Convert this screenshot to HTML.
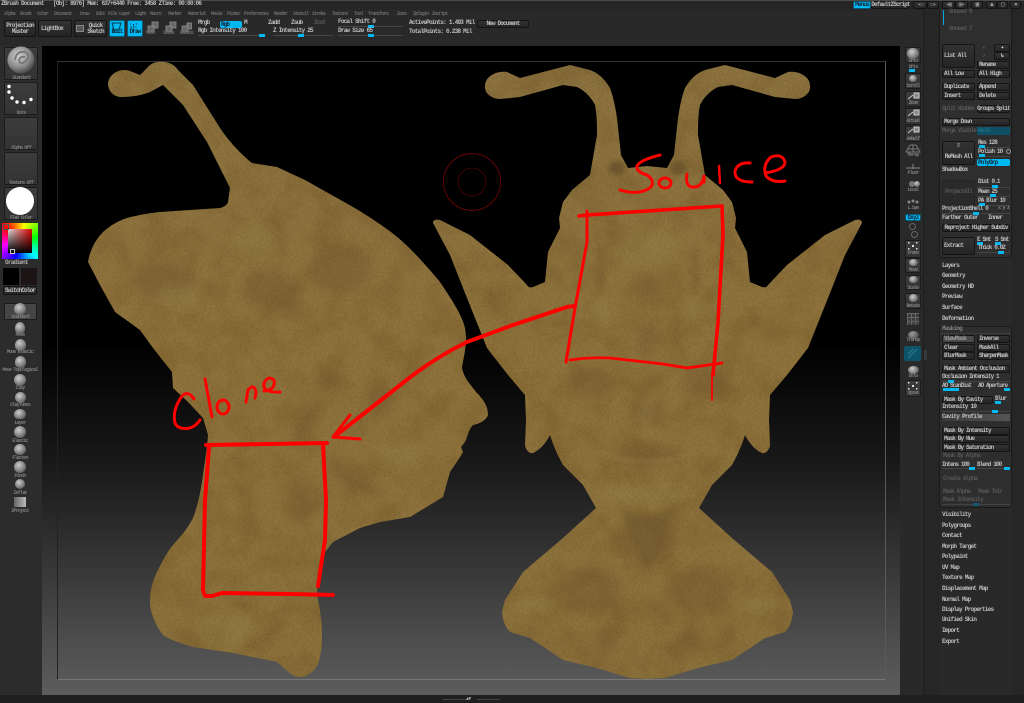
<!DOCTYPE html>
<html><head><meta charset="utf-8"><style>
html,body{margin:0;padding:0;background:#2a2a2a;width:1024px;height:703px;overflow:hidden}
#r{position:relative;width:1024px;height:703px;overflow:hidden;background:#292929;font:bold 6px/8px "Liberation Mono",monospace;letter-spacing:-.75px;color:#bdbdbd;filter:blur(.3px)}
#r div,#r i,#r b{position:absolute;display:block;font-style:normal;font-weight:bold;white-space:nowrap}
.b{display:flex!important;align-items:center;justify-content:center;background:linear-gradient(#323232,#252525);border:1px solid #141414;border-radius:2px;box-sizing:border-box;color:#bdbdbd;letter-spacing:-.85px}
.d{color:#565656}
.m{color:#6a6a6a;font-size:5px;letter-spacing:-.8px}
.s{height:1px;background:#444}
.h{width:6px;height:3px;background:#00b9f2}
.c{background:#00b9f2!important;color:#123!important;border-color:#0a5a75!important}
.u{background:linear-gradient(#3c3c3c,#333);border:1px solid #1c1c1c;box-sizing:border-box;border-radius:1px}
.l{text-align:center;color:#7c7c7c;font-size:5px;letter-spacing:-.8px}
.o{border-radius:50%;background:radial-gradient(circle at 40% 35%,#ccc,#777 60%,#333)}
</style></head><body><div id="r">

<!-- band backgrounds -->
<div style="left:0;top:0;width:1024px;height:1px;background:#4a4a4a"></div>
<div style="left:0;top:1px;width:1024px;height:9px;background:#262626"></div>
<div style="left:923px;top:10px;width:17px;height:693px;background:#262626"></div>
<div style="left:923px;top:10px;width:1px;height:693px;background:#1e1e1e"></div>
<div style="left:1012px;top:10px;width:12px;height:693px;background:#262626"></div>
<div style="left:0;top:695px;width:1024px;height:8px;background:#1f1f1f"></div>
<div style="left:0;top:46px;width:42px;height:649px;background:#2c2c2c"></div>

<!-- title -->
<b style="left:1px;top:0">ZBrush Document</b>
<b style="left:53px;top:0">[Obj: 8976] Mem: 637+6440 Free: 3458 ZTime: 00:00:06</b>
<b class="c b" style="left:853px;top:1px;width:18px;height:8px">Menus</b>
<b class="b" style="left:871px;top:1px;width:39px;height:8px">DefaultZScript</b>
<b class="b" style="left:913px;top:1px;width:14px;height:8px;color:#888">◂▭</b>
<b class="b" style="left:927px;top:1px;width:12px;height:8px;color:#888">▭▸</b>
<b class="b" style="left:942px;top:1px;width:13px;height:8px;color:#888">◂▣</b>
<b class="b" style="left:955px;top:1px;width:13px;height:8px;color:#888">▣▸</b>
<b class="b" style="left:971px;top:1px;width:12px;height:8px;color:#aaa">▣</b>
<b class="b" style="left:986px;top:1px;width:11px;height:8px;color:#aaa">▲</b>
<b class="b" style="left:997px;top:1px;width:11px;height:8px;color:#aaa">▢</b>
<b class="b" style="left:1010px;top:1px;width:11px;height:8px;color:#ddd">✕</b>

<!-- menus -->
<div class="m" style="left:0;top:10px;width:480px;height:8px">
<b style="left:4px">Alpha</b><b style="left:20px">Brush</b><b style="left:37px">Color</b><b style="left:54px">Document</b><b style="left:80px">Draw</b><b style="left:96px">Edit</b><b style="left:108px">File</b><b style="left:119px">Layer</b><b style="left:135px">Light</b><b style="left:150px">Macro</b><b style="left:168px">Marker</b><b style="left:188px">Material</b><b style="left:211px">Movie</b><b style="left:227px">Picker</b><b style="left:244px">Preferences</b><b style="left:274px">Render</b><b style="left:293px">Stencil</b><b style="left:312px">Stroke</b><b style="left:332px">Texture</b><b style="left:354px">Tool</b><b style="left:368px">Transform</b><b style="left:397px">Zoom</b><b style="left:413px">Zplugin</b><b style="left:432px">Zscript</b>
</div>

<!-- toolbar -->
<b class="b" style="left:4px;top:20px;width:32px;height:17px;white-space:normal;text-align:center;line-height:6px">Projection<br>Master</b>
<b class="b" style="left:38px;top:20px;width:34px;height:17px;justify-content:flex-start;padding-left:2px">LightBox</b>
<b class="b" style="left:74px;top:20px;width:33px;height:17px;text-align:center;line-height:6px;padding-left:10px">Quick<br>Sketch</b>
<i style="left:76px;top:25px;width:8px;height:7px;background:#555;border:1px solid #888;box-sizing:border-box"></i>
<b class="c b" style="left:109px;top:20px;width:16px;height:17px;align-items:flex-end">Edit</b>
<b class="c b" style="left:127px;top:20px;width:16px;height:17px;align-items:flex-end">Draw</b>
<svg style="position:absolute;left:110px;top:21px" width="32" height="11" fill="none" stroke="#06384a"><path d="M2 2h9l-2 7H4zM4 9v2M9 9v2"/><path d="M23.500 3v6M20.500 6h6M20 3h1M26 3h1M20 9h1M26 9h1" stroke-dasharray="1.500 1"/></svg>
<svg style="position:absolute;left:146px;top:21px" width="46" height="12" fill="#666" stroke="#999" stroke-width=".7"><rect x="6" y="1" width="6" height="6"/><rect x="2" y="5" width="6" height="6"/><rect x="24" y="1" width="6" height="6"/><rect x="20" y="5" width="6" height="6"/><rect x="41" y="2" width="5" height="6"/><rect x="36" y="5" width="6" height="6"/></svg>
<b class="m" style="left:146px;top:29px">Move</b><b class="m" style="left:163px;top:29px">Scale</b><b class="m" style="left:180px;top:29px">Rotate</b>
<b style="left:198px;top:19px">Mrgb</b><b class="c b" style="left:220px;top:21px;width:22px;height:7px;justify-content:flex-start;padding-left:1px;border:0">Rgb</b><b style="left:244px;top:19px">M</b>
<b style="left:268px;top:19px">Zadd</b><b style="left:291px;top:19px">Zsub</b><b class="d" style="left:314px;top:19px">Zcut</b>
<b style="left:198px;top:27px">Rgb Intensity 100</b><i class="s" style="left:198px;top:35px;width:68px"></i><i class="h" style="left:259px;top:34px"></i>
<b style="left:273px;top:27px">Z Intensity 25</b><i class="s" style="left:273px;top:35px;width:60px"></i><i class="h" style="left:298px;top:34px"></i>
<b style="left:338px;top:18px">Focal Shift 0</b><i class="s" style="left:338px;top:26px;width:65px"></i><i class="h" style="left:368px;top:25px"></i>
<b style="left:338px;top:27px">Draw Size 65</b><i class="s" style="left:338px;top:35px;width:65px"></i><i class="h" style="left:368px;top:34px"></i>
<b style="left:409px;top:19px">ActivePoints: 1.493 Mil</b>
<b style="left:409px;top:28px">TotalPoints: 6.238 Mil</b>
<b class="b" style="left:477px;top:20px;width:52px;height:8px">New Document</b>

<!-- canvas -->
<div style="left:42px;top:46px;width:858px;height:649px;background:linear-gradient(#000 0,#000 46%,#1a1a1a 65%,#3a3a3a 82%,#5d5d5d 100%)"></div>
<div style="left:57px;top:61px;width:829px;height:619px;box-sizing:border-box;border:1px solid;border-color:#333 #5a5a5a #777 #222"></div>

<svg style="position:absolute;left:0;top:0" width="1024" height="703" viewBox="0 0 1024 703">
<defs>
<filter id="t" x="0" y="0" width="100%" height="100%" color-interpolation-filters="sRGB"><feTurbulence type="fractalNoise" baseFrequency=".035" numOctaves="5" seed="7"/><feColorMatrix values="0 0 0 0 .36  0 0 0 0 .24  0 0 0 0 .08  1.800 0 0 0 -.72"/></filter>
<filter id="t2" x="0" y="0" width="100%" height="100%" color-interpolation-filters="sRGB"><feTurbulence type="fractalNoise" baseFrequency=".5" numOctaves="2" seed="3"/><feColorMatrix values="0 0 0 0 .3  0 0 0 0 .24  0 0 0 0 .1  1 0 0 0 -.42"/></filter>
<filter id="bl" x="-40%" y="-40%" width="180%" height="180%"><feGaussianBlur stdDeviation="5"/></filter>
<filter id="bs" x="-40%" y="-40%" width="180%" height="180%"><feGaussianBlur stdDeviation="2"/></filter>
<clipPath id="cl">
<path id="pr" d="M108 83C110 72 122 68 130 71L140 75C146 70 150 62 158 62C167 61 174 64 178 70L193 85L220 128C230 143 242 155 252 163L277 167L305 180L353 207C375 220 392 232 403 242C418 256 430 270 440 282C452 300 462 315 465 328C468 345 463 358 462 368C464 378 470 384 476 392C482 398 488 405 488 415C486 421 478 424 473 425C468 430 468 436 465 442L461 447L463 452L460 457L450 472L443 497L410 517L380 522L360 528L333 542L325 552L318 572L317 595C320 610 322 620 322 635C322 650 320 658 318 664C314 672 307 677 300 677C292 677 284 668 277 662L233 653L193 647C180 643 170 640 163 635C155 625 150 612 150 602C150 590 153 580 157 572C162 562 167 552 173 545C182 535 188 528 193 518C198 505 201 490 203 475C205 460 207 450 208 435L203 418L188 402L173 388L172 372L153 348L140 330L115 312L100 285L88 262C90 250 95 240 103 232C111 225 118 221 127 218C138 215 150 213 160 212L220 208C224 207 227 205 228 202L230 188L207 142L183 105L163 85L150 92C140 96 130 97 120 97C112 96 108 90 108 83Z"/>
<path id="fr" d="M647 166L628 168L621 155L617 118C615 105 613 96 610 88C604 78 598 73 590 70L570 65L520 78L507 72C500 71 493 73 488 78C484 83 484 89 487 93C490 97 495 99 500 99L520 97L563 85L577 87C585 91 591 97 595 105C597 115 597 125 597 135L590 175L572 190L563 202L559 218L560 228L548 252L545 282L533 287C530 288 528 287 527 285L508 265L470 235L440 220C436 219 433 220 433 223L450 255L463 288L487 348L508 375L525 395L526 420L525 445C526 451 530 454 533 453C540 450 546 443 550 435C553 445 558 456 563 465L583 485L596 508L563 538L523 572L505 600L502 612C503 622 506 628 510 632L530 638L563 660L597 668L630 678L647 679L665 678L698 668L732 660L765 638L785 632C789 628 792 622 793 612L790 600L772 572L732 538L699 508L712 485L732 465C737 456 742 445 745 435C749 443 755 450 762 453C765 454 769 451 770 445L769 420L770 395L787 375L808 348L832 288L845 255L862 223C862 220 859 219 855 220L825 235L787 265L768 285C767 287 765 288 762 287L750 282L747 252L735 228L736 218L732 202L723 190L705 175L698 135C698 125 698 115 700 105C704 97 710 91 718 87L732 85L775 97L795 99C800 99 805 97 808 93C811 89 811 83 807 78C802 73 795 71 788 72L775 78L725 65L705 70C697 73 691 78 685 88C682 96 680 105 678 118L674 155L667 168L647 166Z"/>
</clipPath>
<linearGradient id="g" x1="0" y1="0" x2="0" y2="1"><stop offset="0" stop-color="#8c7340"/><stop offset=".5" stop-color="#8f733c"/><stop offset="1" stop-color="#8b713b"/></linearGradient>
</defs>
<g clip-path="url(#cl)">
<rect x="80" y="55" width="800" height="630" fill="url(#g)"/>
<rect x="80" y="55" width="800" height="630" filter="url(#t)" opacity=".28"/>
<g filter="url(#bl)" fill="#6f5232" opacity=".38">
<ellipse cx="285" cy="295" rx="9" ry="30" transform="rotate(-25 285 295)"/>
<ellipse cx="340" cy="270" rx="30" ry="22"/>
<ellipse cx="270" cy="290" rx="28" ry="18"/>
<ellipse cx="165" cy="280" rx="30" ry="18"/>
<ellipse cx="300" cy="500" rx="12" ry="25" opacity=".7"/>
<ellipse cx="590" cy="382" rx="22" ry="16"/>
<ellipse cx="705" cy="382" rx="22" ry="16"/>
<ellipse cx="647" cy="285" rx="14" ry="9"/>
<ellipse cx="647" cy="340" rx="10" ry="18"/>
<ellipse cx="647" cy="412" rx="18" ry="12"/>
<ellipse cx="647" cy="455" rx="34" ry="10"/>
<ellipse cx="647" cy="540" rx="28" ry="26"/>
<ellipse cx="590" cy="590" rx="30" ry="22"/>
<ellipse cx="700" cy="590" rx="30" ry="22"/>
<ellipse cx="606" cy="642" rx="10" ry="10"/>
<ellipse cx="688" cy="642" rx="12" ry="12"/>
<ellipse cx="380" cy="400" rx="14" ry="14"/>
<ellipse cx="330" cy="380" rx="12" ry="9"/>
<ellipse cx="305" cy="425" rx="7" ry="26" transform="rotate(25 305 425)"/>
<ellipse cx="355" cy="480" rx="30" ry="8" transform="rotate(30 355 480)"/>
</g>
<g filter="url(#bl)" fill="#9a8850" opacity=".35">
<ellipse cx="647" cy="250" rx="32" ry="20"/>
<ellipse cx="600" cy="310" rx="12" ry="14"/>
<ellipse cx="695" cy="310" rx="12" ry="14"/>
<ellipse cx="647" cy="495" rx="50" ry="12"/>
<ellipse cx="535" cy="605" rx="22" ry="8"/>
<ellipse cx="760" cy="605" rx="22" ry="8"/>
<ellipse cx="647" cy="415" rx="8" ry="24"/>
<ellipse cx="255" cy="240" rx="22" ry="16"/>
<ellipse cx="180" cy="295" rx="22" ry="12"/>
<ellipse cx="400" cy="455" rx="24" ry="14"/>
<ellipse cx="225" cy="630" rx="30" ry="18"/>
</g>
<g filter="url(#bs)" fill="#5d4a28" opacity=".6">
<ellipse cx="617" cy="168" rx="8" ry="7"/><ellipse cx="678" cy="168" rx="8" ry="7"/>
<ellipse cx="600" cy="270" rx="5" ry="25" opacity=".3"/><ellipse cx="695" cy="270" rx="5" ry="25" opacity=".3"/>
<path d="M617 500Q647 530 677 500L660 545L647 570L634 545Z" opacity=".35"/>
</g>
<path d="M600 453Q647 470 694 453" stroke="#a18f55" stroke-width="3" fill="none" opacity=".4" filter="url(#bs)"/>
<rect x="80" y="55" width="800" height="630" filter="url(#t2)" opacity=".5"/>
</g>

<!-- cursor -->
<circle cx="472" cy="182" r="28.500" fill="none" stroke="#640505" stroke-width="1"/>
<circle cx="472" cy="182" r="14" fill="none" stroke="#3d0303" stroke-width="1"/>

<!-- red strokes -->
<g fill="none" stroke="#ff0000" stroke-linecap="round" stroke-linejoin="round">
<g stroke-width="3.600">
<path d="M579 216L587 215L722 206"/>
<path d="M722 206L723 235L718 322L713 375"/>
<path d="M587 211L587 242L575 308L566 362" stroke-width="3"/>
<path d="M570 360Q590 357 610 358L663 364L687 368L722 363" stroke-width="2.800"/>
<path d="M574 306L567 307L513 325L467 342Q440 355 413 375L334 437" stroke-width="4"/>
<path d="M350 415L333 437L360 439" stroke-width="3"/>
<path d="M206 445L327 443" stroke-width="4"/>
<path d="M209 448L205 500L203 590L205 596L212 596L222 593L290 594L333 595" stroke-width="4"/>
<path d="M323 444L326 500L325 540L318 586" stroke-width="4"/>
</g>
<g stroke-width="3">
<path d="M660 155Q640 160 637 166Q636 172 647 175Q655 180 651 187Q640 196 620 190"/>
<ellipse cx="665" cy="183" rx="6" ry="5"/>
<path d="M687 174Q685 186 692 187Q702 188 704 176L704 182"/>
<path d="M719 166L720 183" stroke-width="2.400"/>
<path d="M750 163Q738 162 735 171Q734 182 752 182"/>
<path d="M765 173Q785 170 785 162Q782 153 771 157Q762 165 766 176Q772 183 785 181"/>
<path d="M194 399Q188 390 182 396Q172 410 175 423Q178 430 190 428Q196 426 200 420"/>
<path d="M205 379L212 417"/>
<ellipse cx="223" cy="407" rx="6" ry="7"/>
<path d="M246 402L248 390Q254 383 256 392L255 398"/>
<path d="M264 391Q276 390 274 380Q268 375 264 383Q262 393 280 392"/>
</g>
<path d="M712 375L712 400" stroke-width="1.800"/>
</g>
</svg>

<!-- bottom handle -->
<i style="left:443px;top:699px;width:24px;height:1px;background:#444"></i><i style="left:477px;top:699px;width:23px;height:1px;background:#444"></i>
<b style="left:466px;top:695px;color:#aaa;font-size:5px">▲▼</b>

<!-- left shelf -->
<div class="u" style="left:4px;top:47px;width:34px;height:33px"></div>
<svg style="position:absolute;left:7px;top:46px" width="28" height="28"><defs><radialGradient id="s1" cx=".4" cy=".35" r=".7"><stop offset="0" stop-color="#d0d0d0"/><stop offset=".6" stop-color="#8c8c8c"/><stop offset="1" stop-color="#3e3e3e"/></radialGradient></defs><circle cx="14" cy="14" r="13.500" fill="url(#s1)"/><path d="M8 14Q9 5 18 6Q24 9 19 15Q13 20 12 14Q13 10 18 11" fill="none" stroke="#777" stroke-width="1.800"/></svg>
<b class="l" style="left:4px;top:74px;width:34px">Standard</b>

<div class="u" style="left:4px;top:82px;width:34px;height:33px"></div>
<svg style="position:absolute;left:4px;top:82px" width="34" height="26" fill="#fff"><circle cx="5" cy="4.500" r="1.700"/><circle cx="5" cy="10" r="1.700"/><circle cx="8" cy="16" r="1.700"/><circle cx="13" cy="20" r="1.700"/><circle cx="20" cy="20.500" r="1.700"/><circle cx="27" cy="17.500" r="1.700"/></svg>
<b class="l" style="left:4px;top:109px;width:34px">Dots</b>

<div class="u" style="left:4px;top:117px;width:34px;height:33px"></div>
<b class="l" style="left:4px;top:144px;width:34px">Alpha Off</b>
<div class="u" style="left:4px;top:152px;width:34px;height:33px"></div>
<b class="l" style="left:4px;top:179px;width:34px">Texture Off</b>
<div class="u" style="left:4px;top:187px;width:34px;height:33px"></div>
<i style="left:6px;top:187px;width:28px;height:28px;border-radius:50%;background:#fff"></i>
<b class="l" style="left:4px;top:214px;width:34px">Flat Color</b>

<!-- color picker -->
<div style="left:2px;top:223px;width:36px;height:36px;background:conic-gradient(from 315deg,#f00,#ff0,#0f0,#0ff,#00f,#f0f,#f00)"></div>
<div style="left:8px;top:229px;width:24px;height:24px;background:linear-gradient(transparent,#000),linear-gradient(90deg,#ddd,#e00000)"></div>
<i style="left:3px;top:224px;width:4px;height:4px;border:1px solid #555"></i>
<i style="left:10px;top:249px;width:3px;height:3px;border:1px solid #ccc"></i>
<b style="left:5px;top:259px;color:#aaa">Gradient</b>
<i style="left:3px;top:268px;width:16px;height:17px;background:#000"></i>
<i style="left:21px;top:268px;width:16px;height:17px;background:#1d1416"></i>
<b class="b" style="left:3px;top:286px;width:34px;height:9px">SwitchColor</b>

<!-- brushes -->
<div class="u" style="left:4px;top:303px;width:33px;height:17px;background:#454545"></div>
<i class="o" style="left:14px;top:303px;width:12px;height:12px"></i><b class="l" style="left:0;top:313px;width:40px">Standard</b>
<i class="o" style="left:15px;top:322px;width:10px;height:12px;border-radius:60% 60% 50% 50%"></i><b class="l" style="left:0;top:331px;width:40px">Move</b>
<i class="o" style="left:15px;top:339px;width:11px;height:12px;border-radius:60% 60% 50% 50%"></i><b class="l" style="left:0;top:348px;width:40px">Move Elastic</b>
<i class="o" style="left:15px;top:356px;width:11px;height:12px;border-radius:60% 60% 50% 50%"></i><b class="l" style="left:0;top:366px;width:40px">Move Topological</b>
<i class="o" style="left:14px;top:374px;width:12px;height:12px"></i><b class="l" style="left:0;top:384px;width:40px">Clay</b>
<i class="o" style="left:15px;top:392px;width:11px;height:11px"></i><b class="l" style="left:0;top:401px;width:40px">ClayTubes</b>
<i class="o" style="left:14px;top:409px;width:12px;height:10px;border-radius:50% 50% 40% 40%"></i><b class="l" style="left:0;top:419px;width:40px">Layer</b>
<i class="o" style="left:14px;top:426px;width:12px;height:12px"></i><b class="l" style="left:0;top:437px;width:40px">Elastic</b>
<i class="o" style="left:14px;top:444px;width:12px;height:11px"></i><b class="l" style="left:0;top:454px;width:40px">Flatten</b>
<i class="o" style="left:14px;top:461px;width:12px;height:12px"></i><b class="l" style="left:0;top:472px;width:40px">Pinch</b>
<i class="o" style="left:15px;top:479px;width:10px;height:10px"></i><b class="l" style="left:0;top:489px;width:40px">Inflat</b>
<i style="left:14px;top:497px;width:12px;height:10px;background:linear-gradient(90deg,#666,#bbb)"></i><b class="l" style="left:0;top:507px;width:40px">ZProject</b>

<!-- right shelf -->
<div class="u" style="left:905px;top:47px;width:16px;height:16px"></div>
<i class="o" style="left:907px;top:48px;width:12px;height:11px"></i>
<b class="l" style="left:903px;top:57px;width:20px">SPix</b>
<b class="l" style="left:903px;top:63px;width:20px">SPix</b><i class="h" style="left:909px;top:69px"></i>
<div class="u" style="left:905px;top:73px;width:16px;height:16px"></div><b class="l" style="left:903px;top:82px;width:20px">Scroll</b>
<i class="o" style="left:909px;top:75px;width:8px;height:7px"></i>
<div class="u" style="left:905px;top:91px;width:16px;height:16px"></div><b class="l" style="left:903px;top:99px;width:20px">Zoom</b>
<div class="u" style="left:905px;top:108px;width:16px;height:17px"></div><b class="l" style="left:903px;top:117px;width:20px">Actual</b>
<div class="u" style="left:905px;top:126px;width:16px;height:16px"></div><b class="l" style="left:903px;top:135px;width:20px">AAHalf</b>
<svg style="position:absolute;left:905px;top:92px" width="16" height="50" stroke="#ccc" fill="#888" stroke-width="1"><path d="M3 7L8 3M9 1h5v5H9zM3 24L8 20M9 18h5v5H9zM3 41L8 37M9 35h5v5H9z"/></svg>
<b class="l" style="left:903px;top:151px;width:20px">Persp</b>
<svg style="position:absolute;left:905px;top:144px" width="16" height="9" stroke="#777" fill="none"><path d="M1 8L5 1h6l4 7zM8 1v7M3 5h10"/></svg>
<b class="l" style="left:903px;top:169px;width:20px">Floor</b>
<svg style="position:absolute;left:905px;top:163px" width="16" height="7" stroke="#888" fill="none"><path d="M1 5h14M8 1v5"/></svg>
<b class="l" style="left:903px;top:186px;width:20px">Local</b>
<i class="o" style="left:909px;top:181px;width:6px;height:6px;background:#777"></i><i class="o" style="left:914px;top:181px;width:6px;height:6px"></i>
<b class="l" style="left:903px;top:204px;width:20px">L.Sym</b>
<svg style="position:absolute;left:906px;top:199px" width="14" height="6" fill="#888"><circle cx="3" cy="3" r="1.500"/><circle cx="7" cy="2" r="1.500"/><circle cx="11" cy="3" r="1.500"/></svg>
<b class="c b" style="left:905px;top:214px;width:16px;height:7px;border-radius:2px">Gxyz</b>
<i style="left:909px;top:223px;width:5px;height:5px;border:1px solid #666;border-radius:50%"></i>
<i style="left:911px;top:231px;width:5px;height:5px;border:1px solid #666;border-radius:50%"></i>
<div class="u" style="left:905px;top:240px;width:16px;height:18px"></div><b class="l" style="left:903px;top:249px;width:20px">Frame</b>
<svg style="position:absolute;left:908px;top:242px" width="10" height="8" fill="#ddd"><rect x="0" y="0" width="1.500" height="1.500"/><rect x="8" y="0" width="1.500" height="1.500"/><rect x="0" y="6" width="1.500" height="1.500"/><rect x="8" y="6" width="1.500" height="1.500"/><rect x="4" y="3" width="2" height="2"/></svg>
<div class="u" style="left:905px;top:258px;width:16px;height:15px"></div><i class="o" style="left:909px;top:259px;width:9px;height:7px"></i><b class="l" style="left:903px;top:266px;width:20px">Move</b>
<div class="u" style="left:905px;top:275px;width:16px;height:15px"></div><i class="o" style="left:909px;top:276px;width:9px;height:7px"></i><b class="l" style="left:903px;top:284px;width:20px">Scale</b>
<div class="u" style="left:905px;top:293px;width:16px;height:16px"></div><i class="o" style="left:909px;top:294px;width:9px;height:8px"></i><b class="l" style="left:903px;top:302px;width:20px">Rotate</b>
<i style="left:907px;top:313px;width:12px;height:12px;background:repeating-linear-gradient(90deg,#666 0 1px,transparent 1px 4px),repeating-linear-gradient(#666 0 1px,#3a3a3a 1px 4px)"></i><b class="l" style="left:903px;top:319px;width:20px;color:#555">PolyF</b>
<i class="o" style="left:908px;top:331px;width:11px;height:8px;opacity:.7"></i><b class="l" style="left:903px;top:336px;width:20px">Transp</b>
<div style="left:904px;top:346px;width:17px;height:15px;background:#0e5368;border-radius:2px"></div>
<svg style="position:absolute;left:904px;top:346px" width="17" height="15" stroke="#2b7d95"><path d="M4 12L13 3M4 8L9 3"/></svg>
<i class="o" style="left:908px;top:366px;width:11px;height:8px"></i><b class="l" style="left:903px;top:372px;width:20px">Solo</b>
<div class="u" style="left:905px;top:380px;width:16px;height:17px"></div><b class="l" style="left:903px;top:389px;width:20px">Xpose</b>
<svg style="position:absolute;left:908px;top:382px" width="10" height="8" fill="#ddd"><rect x="0" y="0" width="1.500" height="1.500"/><rect x="8" y="0" width="1.500" height="1.500"/><rect x="0" y="6" width="1.500" height="1.500"/><rect x="8" y="6" width="1.500" height="1.500"/><rect x="4" y="3" width="2" height="2"/></svg>
<i style="left:924px;top:350px;width:3px;height:10px;background:#3a3a3a"></i>

<!-- right panel top -->
<div style="left:939px;top:9px;width:73px;height:249px;background:#2e2e2e;border:1px solid #1a1a1a;border-top:0;border-radius:0 0 3px 3px;box-sizing:border-box"></div>
<i style="left:943px;top:10px;width:1px;height:15px;background:#00a8dc"></i>
<b class="d" style="left:949px;top:8px">Unused 6</b><b class="d" style="left:949px;top:25px">Unused 7</b>
<b class="b" style="left:942px;top:44px;width:33px;height:24px;justify-content:flex-start;padding-left:1px">List All</b>
<b class="b" style="left:994px;top:44px;width:16px;height:8px;color:#ddd">✦</b>
<b class="b" style="left:994px;top:52px;width:16px;height:8px;color:#ddd">↳</b>
<b class="d" style="left:982px;top:44px">✦</b><b class="d" style="left:982px;top:52px">↗</b>
<b class="b" style="left:977px;top:61px;width:33px;height:8px;justify-content:flex-start;padding-left:1px">Rename</b>
<b class="b" style="left:942px;top:70px;width:33px;height:8px;justify-content:flex-start;padding-left:1px">All Low</b>
<b class="b" style="left:977px;top:70px;width:33px;height:8px;justify-content:flex-start;padding-left:1px">All High</b>
<b class="b" style="left:942px;top:83px;width:33px;height:8px;justify-content:flex-start;padding-left:1px">Duplicate</b>
<b class="b" style="left:977px;top:83px;width:33px;height:8px;justify-content:flex-start;padding-left:1px">Append</b>
<b class="b" style="left:942px;top:92px;width:33px;height:8px;justify-content:flex-start;padding-left:1px">Insert</b>
<b class="b" style="left:977px;top:92px;width:33px;height:8px;justify-content:flex-start;padding-left:1px">Delete</b>
<b class="d" style="left:942px;top:105px;letter-spacing:-.95px">Split Hidden</b>
<b class="b" style="left:977px;top:105px;width:33px;height:8px">Groups Split</b>
<b class="b" style="left:942px;top:118px;width:68px;height:8px;justify-content:flex-start;padding-left:1px">Merge Down</b>
<b class="d" style="left:942px;top:127px;letter-spacing:-1px">Merge Visible</b>
<i style="left:977px;top:127px;width:33px;height:8px;background:#0f4f63"></i><b style="left:978px;top:127px;color:#1a6f88">Weld</b>
<b class="b" style="left:942px;top:141px;width:33px;height:24px;padding-top:8px">ReMesh All</b>
<b style="left:957px;top:142px;color:#999">⁝⁝</b>
<b style="left:978px;top:139px;letter-spacing:-.9px">Res 128</b><i class="s" style="left:977px;top:147px;width:33px"></i><i class="h" style="left:979px;top:145px"></i>
<b style="left:978px;top:148px;letter-spacing:-.9px">Polish 10</b><i class="s" style="left:977px;top:156px;width:33px"></i><i class="h" style="left:979px;top:154px"></i>
<i style="left:1006px;top:149px;width:3px;height:3px;border:1px solid #999;border-radius:50%"></i>
<b class="c b" style="left:977px;top:159px;width:33px;height:7px;justify-content:flex-start;padding-left:1px;border:0">PolyGrp</b>
<b style="left:942px;top:166px">ShadowBox</b>
<div style="left:942px;top:180px;width:33px;height:25px;background:#2a2a2a;border:1px solid #252525;box-sizing:border-box"></div><b class="d" style="left:945px;top:188px;letter-spacing:-.9px">ProjectAll</b>
<b style="left:978px;top:178px;letter-spacing:-.9px">Dist 0.1</b><i class="s" style="left:977px;top:187px;width:33px"></i><i class="h" style="left:992px;top:185px"></i>
<b style="left:978px;top:188px;letter-spacing:-.9px">Mean 25</b><i class="s" style="left:977px;top:196px;width:33px"></i><i class="h" style="left:990px;top:194px"></i>
<b style="left:978px;top:197px;letter-spacing:-.9px">PA Blur 10</b><i class="s" style="left:977px;top:205px;width:33px"></i><i class="h" style="left:979px;top:203px"></i>
<b style="left:942px;top:205px;letter-spacing:-.9px">ProjectionShell 0</b><i class="s" style="left:942px;top:213px;width:68px"></i><i class="h" style="left:973px;top:212px"></i>
<b style="left:998px;top:204px;color:#888;font-size:5px">x y z</b>
<b style="left:942px;top:214px;letter-spacing:-.85px">Farther Outer</b><b style="left:988px;top:214px">Inner</b>
<b class="b" style="left:942px;top:224px;width:68px;height:8px">Reproject Higher Subdiv</b>
<b class="b" style="left:942px;top:237px;width:33px;height:18px;justify-content:flex-start;padding-left:1px">Extract</b>
<b style="left:977px;top:236px;letter-spacing:-.9px">E Smt</b><b style="left:995px;top:236px;letter-spacing:-.9px">S Smt</b>
<i class="h" style="left:977px;top:242px"></i><i class="h" style="left:995px;top:242px"></i>
<b style="left:978px;top:244px;letter-spacing:-.9px">Thick 0.02</b><i class="s" style="left:977px;top:252px;width:33px"></i><i class="h" style="left:998px;top:251px"></i>

<!-- headers -->
<b style="left:942px;top:262px">Layers</b><b style="left:942px;top:272px">Geometry</b><b style="left:942px;top:283px">Geometry HD</b><b style="left:942px;top:293px">Preview</b><b style="left:942px;top:304px">Surface</b><b style="left:942px;top:315px">Deformation</b>

<!-- masking -->
<div style="left:939px;top:326px;width:73px;height:182px;background:#2e2e2e;border:1px solid #1a1a1a;border-radius:3px;box-sizing:border-box"></div>
<b style="left:942px;top:325px;color:#808080">Masking</b>
<i style="left:940px;top:333px;width:71px;height:1px;background:#3e3e3e"></i>
<b class="b" style="left:942px;top:335px;width:33px;height:8px;justify-content:flex-start;padding-left:1px;background:#4a4a4a;color:#999">ViewMask</b>
<b class="b" style="left:977px;top:335px;width:33px;height:8px;justify-content:flex-start;padding-left:1px">Inverse</b>
<b class="b" style="left:942px;top:344px;width:33px;height:8px;justify-content:flex-start;padding-left:1px">Clear</b>
<b class="b" style="left:977px;top:344px;width:33px;height:8px;justify-content:flex-start;padding-left:1px">MaskAll</b>
<b class="b" style="left:942px;top:352px;width:33px;height:8px;justify-content:flex-start;padding-left:1px">BlurMask</b>
<b class="b" style="left:977px;top:352px;width:33px;height:8px;justify-content:flex-start;padding-left:1px;letter-spacing:-1px">SharpenMask</b>
<b class="b" style="left:942px;top:365px;width:68px;height:8px;justify-content:flex-start;padding-left:1px">Mask Ambient Occlusion</b>
<b style="left:942px;top:373px;letter-spacing:-.9px">Occlusion Intensity 1</b><i class="s" style="left:942px;top:381px;width:68px"></i><i class="h" style="left:948px;top:380px"></i>
<b style="left:942px;top:382px;letter-spacing:-.95px">AO ScanDist</b><b style="left:978px;top:382px;letter-spacing:-.95px">AO Aperture</b>
<i class="h" style="left:943px;top:388px;width:16px"></i><i class="h" style="left:1004px;top:388px"></i>
<b class="b" style="left:942px;top:396px;width:51px;height:8px;justify-content:flex-start;padding-left:1px">Mask By Cavity</b>
<b style="left:995px;top:395px">Blur</b><i class="h" style="left:995px;top:401px"></i>
<b style="left:942px;top:403px">Intensity 10</b><i class="s" style="left:942px;top:411px;width:68px"></i><i class="h" style="left:992px;top:410px"></i>
<div style="left:942px;top:414px;width:68px;height:7px;background:linear-gradient(90deg,#3a3a3a,#555)"></div><b style="left:942px;top:413px">Cavity Profile</b>
<b class="b" style="left:942px;top:427px;width:68px;height:8px;justify-content:flex-start;padding-left:1px">Mask By Intensity</b>
<b class="b" style="left:942px;top:435px;width:68px;height:8px;justify-content:flex-start;padding-left:1px">Mask By Hue</b>
<b class="b" style="left:942px;top:444px;width:68px;height:8px;justify-content:flex-start;padding-left:1px">Mask By Saturation</b>
<b class="d" style="left:943px;top:452px">Mask By Alpha</b>
<b style="left:942px;top:461px;letter-spacing:-.9px">Intens 100</b><b style="left:977px;top:461px;letter-spacing:-.9px">Blend 100</b>
<i class="s" style="left:942px;top:468px;width:33px"></i><i class="s" style="left:977px;top:468px;width:33px"></i>
<i class="h" style="left:969px;top:467px"></i><i class="h" style="left:1004px;top:467px"></i>
<b class="d" style="left:943px;top:475px">Create Alpha</b>
<b class="d" style="left:943px;top:488px;letter-spacing:-.9px">Mask Alpha</b><b class="d" style="left:978px;top:488px;letter-spacing:-.9px">Mask Txtr</b>
<b class="d" style="left:943px;top:496px">Mask Intensity</b><i class="s" style="left:942px;top:504px;width:68px"></i><i class="h" style="left:973px;top:503px;background:#0f5a72"></i>

<b style="left:942px;top:511px">Visibility</b><b style="left:942px;top:522px">Polygroups</b><b style="left:942px;top:532px">Contact</b><b style="left:942px;top:543px">Morph Target</b><b style="left:942px;top:553px">Polypaint</b><b style="left:942px;top:564px">UV Map</b><b style="left:942px;top:574px">Texture Map</b><b style="left:942px;top:585px">Displacement Map</b><b style="left:942px;top:596px">Normal Map</b><b style="left:942px;top:606px">Display Properties</b><b style="left:942px;top:616px">Unified Skin</b><b style="left:942px;top:627px">Import</b><b style="left:942px;top:638px">Export</b>

</div></body></html>
